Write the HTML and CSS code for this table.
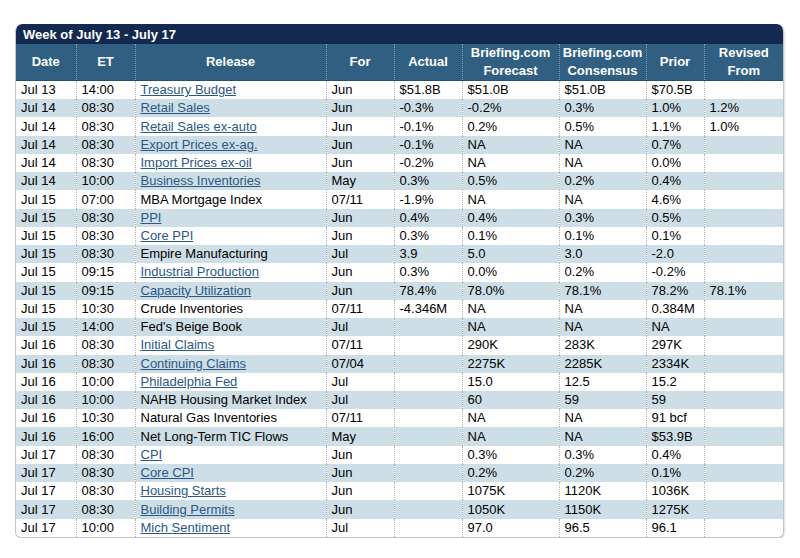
FILE: index.html
```html
<!DOCTYPE html>
<html>
<head>
<meta charset="utf-8">
<link rel="stylesheet" href="styles.css">
</head>
<body>
<div class="page">
  <div class="panel">
    <div class="title">Week of July 13 - July 17</div>
    <table class="cal">
      <colgroup>
        <col class="c-date"><col class="c-et"><col class="c-rel"><col class="c-for"><col class="c-act"><col class="c-fc"><col class="c-cons"><col class="c-prior"><col class="c-rev">
      </colgroup>
      <thead>
        <tr><th>Date</th><th>ET</th><th>Release</th><th>For</th><th>Actual</th><th>Briefing.com<br>Forecast</th><th>Briefing.com<br>Consensus</th><th>Prior</th><th>Revised<br>From</th></tr>
      </thead>
      <tbody>
        <tr><td>Jul 13</td><td>14:00</td><td><a href="#">Treasury Budget</a></td><td>Jun</td><td>$51.8B</td><td>$51.0B</td><td>$51.0B</td><td>$70.5B</td><td></td></tr>
        <tr><td>Jul 14</td><td>08:30</td><td><a href="#">Retail Sales</a></td><td>Jun</td><td>-0.3%</td><td>-0.2%</td><td>0.3%</td><td>1.0%</td><td>1.2%</td></tr>
        <tr><td>Jul 14</td><td>08:30</td><td><a href="#">Retail Sales ex-auto</a></td><td>Jun</td><td>-0.1%</td><td>0.2%</td><td>0.5%</td><td>1.1%</td><td>1.0%</td></tr>
        <tr><td>Jul 14</td><td>08:30</td><td><a href="#">Export Prices ex-ag.</a></td><td>Jun</td><td>-0.1%</td><td>NA</td><td>NA</td><td>0.7%</td><td></td></tr>
        <tr><td>Jul 14</td><td>08:30</td><td><a href="#">Import Prices ex-oil</a></td><td>Jun</td><td>-0.2%</td><td>NA</td><td>NA</td><td>0.0%</td><td></td></tr>
        <tr><td>Jul 14</td><td>10:00</td><td><a href="#">Business Inventories</a></td><td>May</td><td>0.3%</td><td>0.5%</td><td>0.2%</td><td>0.4%</td><td></td></tr>
        <tr><td>Jul 15</td><td>07:00</td><td>MBA Mortgage Index</td><td>07/11</td><td>-1.9%</td><td>NA</td><td>NA</td><td>4.6%</td><td></td></tr>
        <tr><td>Jul 15</td><td>08:30</td><td><a href="#">PPI</a></td><td>Jun</td><td>0.4%</td><td>0.4%</td><td>0.3%</td><td>0.5%</td><td></td></tr>
        <tr><td>Jul 15</td><td>08:30</td><td><a href="#">Core PPI</a></td><td>Jun</td><td>0.3%</td><td>0.1%</td><td>0.1%</td><td>0.1%</td><td></td></tr>
        <tr><td>Jul 15</td><td>08:30</td><td>Empire Manufacturing</td><td>Jul</td><td>3.9</td><td>5.0</td><td>3.0</td><td>-2.0</td><td></td></tr>
        <tr><td>Jul 15</td><td>09:15</td><td><a href="#">Industrial Production</a></td><td>Jun</td><td>0.3%</td><td>0.0%</td><td>0.2%</td><td>-0.2%</td><td></td></tr>
        <tr><td>Jul 15</td><td>09:15</td><td><a href="#">Capacity Utilization</a></td><td>Jun</td><td>78.4%</td><td>78.0%</td><td>78.1%</td><td>78.2%</td><td>78.1%</td></tr>
        <tr><td>Jul 15</td><td>10:30</td><td>Crude Inventories</td><td>07/11</td><td>-4.346M</td><td>NA</td><td>NA</td><td>0.384M</td><td></td></tr>
        <tr><td>Jul 15</td><td>14:00</td><td>Fed's Beige Book</td><td>Jul</td><td></td><td>NA</td><td>NA</td><td>NA</td><td></td></tr>
        <tr><td>Jul 16</td><td>08:30</td><td><a href="#">Initial Claims</a></td><td>07/11</td><td></td><td>290K</td><td>283K</td><td>297K</td><td></td></tr>
        <tr><td>Jul 16</td><td>08:30</td><td><a href="#">Continuing Claims</a></td><td>07/04</td><td></td><td>2275K</td><td>2285K</td><td>2334K</td><td></td></tr>
        <tr><td>Jul 16</td><td>10:00</td><td><a href="#">Philadelphia Fed</a></td><td>Jul</td><td></td><td>15.0</td><td>12.5</td><td>15.2</td><td></td></tr>
        <tr><td>Jul 16</td><td>10:00</td><td>NAHB Housing Market Index</td><td>Jul</td><td></td><td>60</td><td>59</td><td>59</td><td></td></tr>
        <tr><td>Jul 16</td><td>10:30</td><td>Natural Gas Inventories</td><td>07/11</td><td></td><td>NA</td><td>NA</td><td>91 bcf</td><td></td></tr>
        <tr><td>Jul 16</td><td>16:00</td><td>Net Long-Term TIC Flows</td><td>May</td><td></td><td>NA</td><td>NA</td><td>$53.9B</td><td></td></tr>
        <tr><td>Jul 17</td><td>08:30</td><td><a href="#">CPI</a></td><td>Jun</td><td></td><td>0.3%</td><td>0.3%</td><td>0.4%</td><td></td></tr>
        <tr><td>Jul 17</td><td>08:30</td><td><a href="#">Core CPI</a></td><td>Jun</td><td></td><td>0.2%</td><td>0.2%</td><td>0.1%</td><td></td></tr>
        <tr><td>Jul 17</td><td>08:30</td><td><a href="#">Housing Starts</a></td><td>Jun</td><td></td><td>1075K</td><td>1120K</td><td>1036K</td><td></td></tr>
        <tr><td>Jul 17</td><td>08:30</td><td><a href="#">Building Permits</a></td><td>Jun</td><td></td><td>1050K</td><td>1150K</td><td>1275K</td><td></td></tr>
        <tr><td>Jul 17</td><td>10:00</td><td><a href="#">Mich Sentiment</a></td><td>Jul</td><td></td><td>97.0</td><td>96.5</td><td>96.1</td><td></td></tr>
      </tbody>
    </table>
  </div>
</div>
</body>
</html>
```
FILE: styles.css
```css
html, body {
  margin: 0;
  padding: 0;
  background: #ffffff;
  font-family: "Liberation Sans", Arial, sans-serif;
  font-size: 13px;
  color: #000;
}
.page {
  padding: 24px 16px 0 15px;
}
.panel {
  width: 769px;
  box-sizing: border-box;
  border: 1px solid #c4c4c4;
  border-top: none;
  border-radius: 7px 7px 6px 6px;
  box-shadow: 1px 1px 1px #e2e2e2;
  overflow: hidden;
}
.title {
  background: #13294f;
  color: #fff;
  font-weight: bold;
  font-size: 13px;
  height: 20px;
  line-height: 21px;
  padding-left: 8px;
  border-radius: 7px 7px 0 0;
  margin: 0 -1px;
}
.cal {
  width: 100%;
  border-collapse: collapse;
  table-layout: fixed;
}
.c-date { width: 60px; }
.c-et { width: 59px; }
.c-rel { width: 191px; }
.c-for { width: 68px; }
.c-act { width: 68px; }
.c-fc { width: 97px; }
.c-cons { width: 87px; }
.c-prior { width: 58px; }
.c-rev { width: auto; }
.cal th {
  background: #305f82;
  color: #fff;
  font-weight: bold;
  font-size: 13px;
  line-height: 18px;
  height: 35px;
  padding: 0;
  text-align: center;
  border-left: 1px dotted #7f9fb8;
  border-bottom: 1px solid #24506f;
}
.cal th:first-child { border-left: none; }
.cal td {
  height: 18.24px;
  padding: 0 0 0 5px;
  line-height: 16px;
  white-space: nowrap;
  overflow: hidden;
  border-left: 1px dotted #b3b3b3;
}
.cal td:first-child { border-left: none; }
.cal tbody tr:nth-child(even) td { background: #cedee7; }
.cal a {
  color: #2b5884;
  text-decoration: underline;
}
```
